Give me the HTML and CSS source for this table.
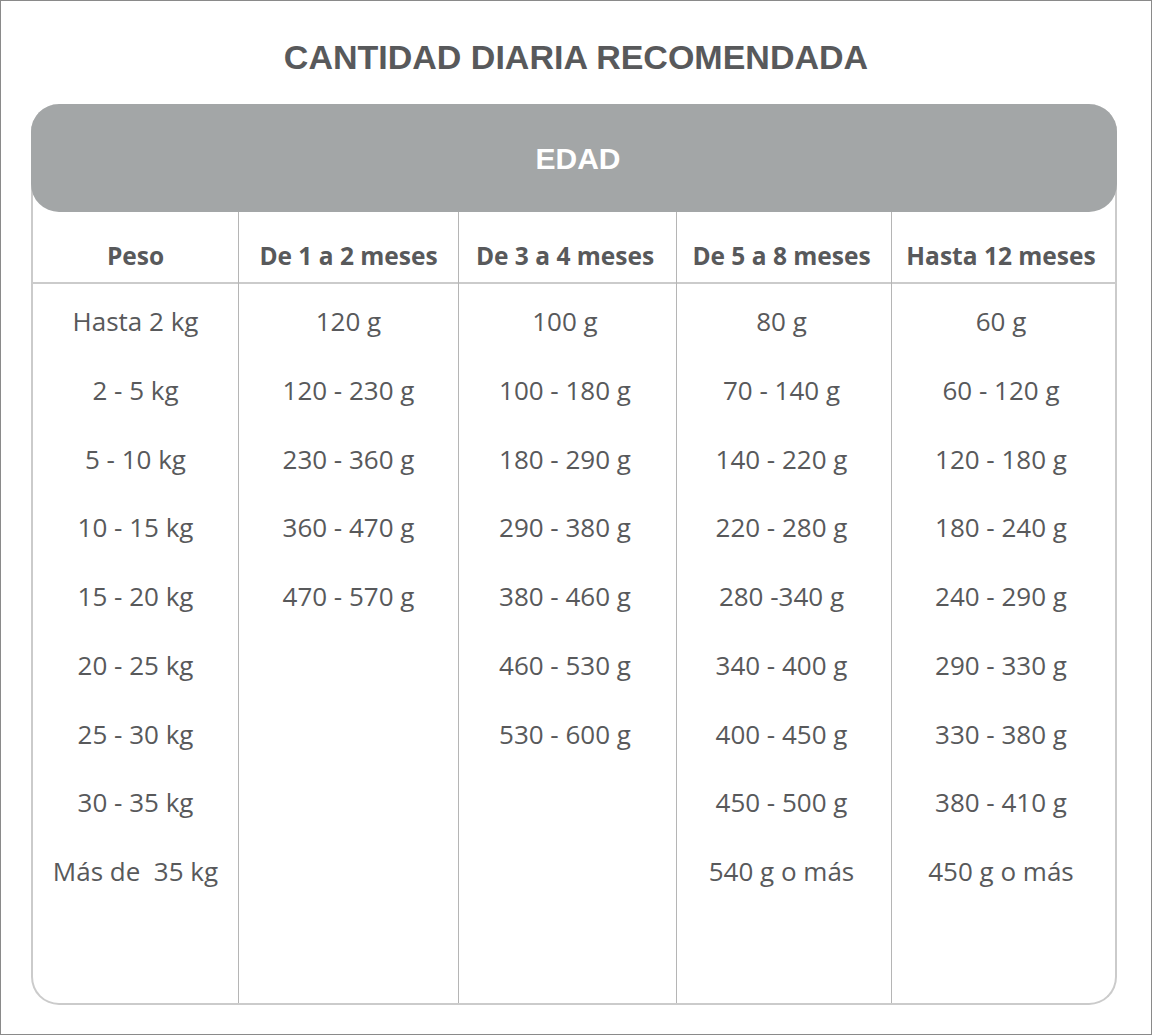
FILE: index.html
```html
<!DOCTYPE html>
<html lang="es">
<head>
<meta charset="utf-8">
<title>Cantidad diaria recomendada</title>
<link rel="stylesheet" href="styles.css">
</head>
<body>
<div class="frame">
  <h1 class="title">CANTIDAD DIARIA RECOMENDADA</h1>
  <div class="table">
    <div class="band">EDAD</div>
    <div class="cols">
      <div class="col c1">
        <div class="head">Peso</div>
        <div class="cells">
          <div class="cell">Hasta 2 kg</div>
          <div class="cell">2 - 5 kg</div>
          <div class="cell">5 - 10 kg</div>
          <div class="cell">10 - 15 kg</div>
          <div class="cell">15 - 20 kg</div>
          <div class="cell">20 - 25 kg</div>
          <div class="cell">25 - 30 kg</div>
          <div class="cell">30 - 35 kg</div>
          <div class="cell">Más de &nbsp;35 kg</div>
        </div>
      </div>
      <div class="col c2">
        <div class="head">De 1 a 2 meses</div>
        <div class="cells">
          <div class="cell">120 g</div>
          <div class="cell">120 - 230 g</div>
          <div class="cell">230 - 360 g</div>
          <div class="cell">360 - 470 g</div>
          <div class="cell">470 - 570 g</div>
        </div>
      </div>
      <div class="col c3 shifted">
        <div class="head">De 3 a 4 meses</div>
        <div class="cells">
          <div class="cell">100 g</div>
          <div class="cell">100 - 180 g</div>
          <div class="cell">180 - 290 g</div>
          <div class="cell">290 - 380 g</div>
          <div class="cell">380 - 460 g</div>
          <div class="cell">460 - 530 g</div>
          <div class="cell">530 - 600 g</div>
        </div>
      </div>
      <div class="col c4 shifted">
        <div class="head">De 5 a 8 meses</div>
        <div class="cells">
          <div class="cell">80 g</div>
          <div class="cell">70 - 140 g</div>
          <div class="cell">140 - 220 g</div>
          <div class="cell">220 - 280 g</div>
          <div class="cell">280 -340 g</div>
          <div class="cell">340 - 400 g</div>
          <div class="cell">400 - 450 g</div>
          <div class="cell">450 - 500 g</div>
          <div class="cell">540 g o más</div>
        </div>
      </div>
      <div class="col c5 shifted">
        <div class="head">Hasta 12 meses</div>
        <div class="cells">
          <div class="cell">60 g</div>
          <div class="cell">60 - 120 g</div>
          <div class="cell">120 - 180 g</div>
          <div class="cell">180 - 240 g</div>
          <div class="cell">240 - 290 g</div>
          <div class="cell">290 - 330 g</div>
          <div class="cell">330 - 380 g</div>
          <div class="cell">380 - 410 g</div>
          <div class="cell">450 g o más</div>
        </div>
      </div>
    </div>
  </div>
</div>
</body>
</html>
```
FILE: styles.css
```css
html, body {
  margin: 0;
  padding: 0;
  background: #ffffff;
}

.frame {
  box-sizing: border-box;
  width: 1152px;
  height: 1035px;
  border: 1px solid #8a8a8a;
  padding: 0 35px 0 30px;
  display: flex;
  flex-direction: column;
}

.title {
  margin: 0 -5px 0 0;
  height: 103px;
  box-sizing: border-box;
  padding-top: 36px;
  text-align: center;
  font-family: "Liberation Sans", Arial, sans-serif;
  font-weight: bold;
  font-size: 34px;
  line-height: 40px;
  color: #58595b;
}

.table {
  box-sizing: border-box;
  width: 1086px;
  height: 901px;
  border: 2px solid #cbcbcb;
  border-top: none;
  border-radius: 28px;
  display: flex;
  flex-direction: column;
}

.band {
  margin: 0 -2px;
  height: 108px;
  box-sizing: border-box;
  padding: 2px 0 0 8px;
  background: #a3a6a7;
  border-radius: 28px;
  color: #ffffff;
  font-family: "Liberation Sans", Arial, sans-serif;
  font-weight: bold;
  font-size: 30px;
  line-height: 106px;
  text-align: center;
  flex: none;
}

.cols {
  flex: 1;
  display: grid;
  grid-template-columns: 205px 220px 218px 215px 1fr;
}

.col {
  display: flex;
  flex-direction: column;
  border-left: 1px solid #b5b5b5;
}

.col.c1 {
  border-left: none;
}

.col.shifted {
  padding-right: 5px;
}

.head {
  height: 72px;
  box-sizing: border-box;
  border-bottom: 2px solid #cbcbcb;
  padding-top: 29px;
  text-align: center;
  font-family: "Open Sans", "Noto Sans", sans-serif;
  font-weight: 700;
  font-size: 24.5px;
  line-height: 30px;
  color: #58595b;
}

.col.shifted .head {
  margin-right: -5px;
  padding-right: 5px;
}

.cells {
  padding-top: 3px;
}

.cell {
  height: 68.75px;
  line-height: 68.75px;
  text-align: center;
  font-family: "Open Sans", "Noto Sans", sans-serif;
  font-size: 26px;
  color: #58595b;
}
```
